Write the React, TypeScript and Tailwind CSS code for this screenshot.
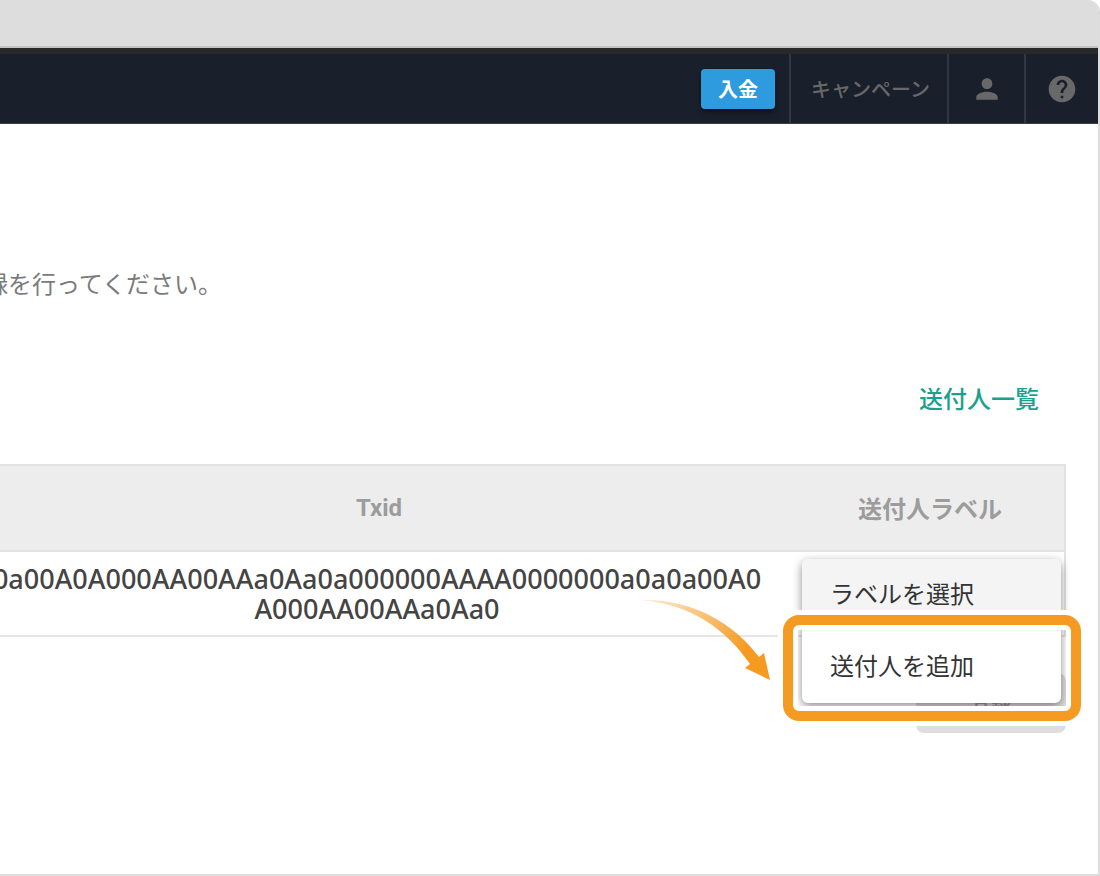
import React from 'react';
import { MdHelp, MdPerson } from 'react-icons/md';

const navIcons = [
  { label: 'アカウント', icon: MdPerson, className: 'w-[77px]' },
  { label: 'ヘルプ', icon: MdHelp, className: 'w-[74px]' },
];

const Header: React.FC = () => (
  <header className="flex h-[76px] justify-end border-t-[6px] border-b border-t-[#28282a] border-b-[#3a3d44] bg-[#1a202b] text-[#686868]">
    <div className="flex items-center pr-[14px]">
      <button
        type="button"
        className="h-10 rounded bg-[#2d9bdd] px-[17px] text-xl leading-none font-bold text-white shadow-md shadow-black/40"
      >
        入金
      </button>
    </div>
    <nav className="flex">
      <a
        href="#campaign"
        className="flex items-center border-l-2 border-[#33363e] pr-[17px] pl-5 text-xl font-medium"
      >
        キャンペーン
      </a>
      {navIcons.map(({ label, icon: Icon, className }) => (
        <a
          key={label}
          href="#"
          aria-label={label}
          className={`flex items-center justify-center border-l-2 border-[#33363e] ${className}`}
        >
          <Icon className="size-8" />
        </a>
      ))}
    </nav>
  </header>
);

const Arrow: React.FC = () => (
  <svg
    viewBox="0 0 132 84"
    className="pointer-events-none absolute top-[46px] -left-[156px] z-20 h-[84px] w-[132px]"
    aria-hidden="true"
  >
    <defs>
      <linearGradient id="arrow-fade" gradientUnits="userSpaceOnUse" x1="0" y1="0" x2="115" y2="62">
        <stop offset="0" stopColor="#f59b22" stopOpacity="0.15" />
        <stop offset="0.9" stopColor="#f59b22" />
      </linearGradient>
    </defs>
    <path
      d="M0 2 C50 0 93 24 119 59 L124 55 L130 82 L105 70 L110 66 C85 30 50 6 0 2 Z"
      fill="url(#arrow-fade)"
    />
  </svg>
);

const LabelMenu: React.FC = () => (
  <ul className="absolute top-[7px] right-[3px] left-[6px] z-10 rounded-md bg-white text-left text-2xl text-[#333333] shadow-[0_3px_10px_rgba(0,0,0,0.45)]">
    <li>
      <button type="button" className="h-[72px] w-full rounded-t-md bg-[#f4f4f4] px-7 pb-1 text-left">
        ラベルを選択
      </button>
    </li>
    <li className="relative">
      <button type="button" className="h-[72px] w-full px-7 pb-1 text-left">
        送付人を追加
      </button>
      {/* Highlight frame with a white edge on both sides */}
      <span className="pointer-events-none absolute -top-4 -right-5 -bottom-[18px] -left-[19px] rounded-2xl border-10 border-[#f59b22] ring-[5px] inset-ring-[5px] ring-white inset-ring-white" />
    </li>
  </ul>
);

export default function App() {
  return (
    <div className="flex min-h-screen flex-col overflow-hidden rounded-tr-xl border-r-2 border-b-2 border-[#dcdcdc] bg-white font-['Noto_Sans_CJK_JP',sans-serif]">
      <div className="h-12 shrink-0 border-b-2 border-[#c2c2c2] bg-[#dddddd]" />
      <Header />
      <main className="pt-[141px]">
        <p className="-ml-4 text-2xl leading-9 text-[#7b7b7b]">録を行ってください。</p>
        <div className="mt-[79px] flex justify-end pr-[59px]">
          <a href="#senders" className="text-2xl leading-9 font-medium text-[#1d9f8e]">
            送付人一覧
          </a>
        </div>
        <div className="mt-12 mr-8 -ml-[38px]">
          <table className="w-full table-fixed border-separate border-spacing-0 border-r-2 border-[#e2e2e2]">
            <thead>
              <tr className="h-[88px] bg-[#ededed] text-2xl text-[#9c9c9c]">
                <th className="border-y-2 border-[#e2e2e2] font-['Roboto','Noto_Sans_CJK_JP',sans-serif] font-bold">
                  Txid
                </th>
                <th className="w-[268px] border-y-2 border-[#e2e2e2] font-bold">送付人ラベル</th>
              </tr>
            </thead>
            <tbody>
              <tr className="h-[85px]">
                <td className="border-b-2 border-[#e6e6e6] pr-6 pl-5 text-center font-['Noto_Sans',sans-serif] text-[27px] leading-[30px] font-medium break-all text-[#444444]">
                  0a00A0A000AA00AAa0Aa0a000000AAAA0000000a0a0a00A0
                  <br />
                  A000AA00AAa0Aa0
                </td>
                <td className="relative border-b-2 border-[#e6e6e6]">
                  <LabelMenu />
                  <Arrow />
                </td>
              </tr>
            </tbody>
          </table>
        </div>
        <div className="mt-9 mr-8 flex justify-end">
          <button
            type="button"
            className="h-[60px] w-[150px] rounded-lg bg-[#dedede] text-xl font-bold text-[#a0a0a0]"
          >
            登録
          </button>
        </div>
      </main>
    </div>
  );
}
